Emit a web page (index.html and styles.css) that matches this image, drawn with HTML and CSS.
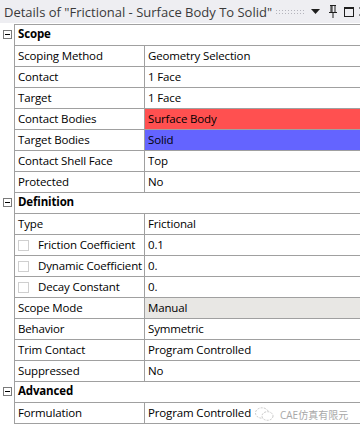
FILE: index.html
```html
<!DOCTYPE html>
<html lang="en">
<head>
  <meta charset="UTF-8">
  <meta name="viewport" content="width=device-width, initial-scale=1.0">
  <title>Details</title>
  <link rel="stylesheet" href="styles.css">
</head>
<body>
  <div class="panel">
    <div class="titlebar">
      <span class="title">Details of "Frictional - Surface Body To Solid"</span>
      <span class="grip"></span>
      <span class="tb-icon">
        <svg width="9" height="6" viewBox="0 0 9 6"><path d="M0 0H9L4.5 5Z" fill="#1e1e1e"/></svg>
      </span>
      <span class="tb-icon">
        <svg width="8" height="13" viewBox="0 0 8 13"><path d="M1 0.5H7M2 0.5V7M3 0.5V7M6 0.5V7M0 7.5H8M4 8V13" stroke="#1e1e1e" fill="none"/></svg>
      </span>
      <span class="tb-icon">
        <svg width="10" height="10" viewBox="0 0 10 10"><rect x="0.5" y="0.5" width="9" height="9" fill="none" stroke="#1e1e1e"/><path d="M0 1.5H10" stroke="#1e1e1e"/></svg>
      </span>
      <span class="tb-icon">
        <svg width="9" height="9" viewBox="0 0 9 9"><path d="M0.5 0.5L8.5 8.5M8.5 0.5L0.5 8.5" stroke="#1e1e1e" stroke-width="1.4"/></svg>
      </span>
    </div>

    <div class="grid">
      <div class="section"><span class="toggle"></span><span class="section-name">Scope</span></div>
      <div class="row"><span></span><div class="name">Scoping Method</div><div class="value">Geometry Selection</div></div>
      <div class="row"><span></span><div class="name">Contact</div><div class="value">1 Face</div></div>
      <div class="row"><span></span><div class="name">Target</div><div class="value">1 Face</div></div>
      <div class="row"><span></span><div class="name">Contact Bodies</div><div class="value red">Surface Body</div></div>
      <div class="row"><span></span><div class="name">Target Bodies</div><div class="value blue">Solid</div></div>
      <div class="row"><span></span><div class="name">Contact Shell Face</div><div class="value">Top</div></div>
      <div class="row"><span></span><div class="name">Protected</div><div class="value">No</div></div>

      <div class="section"><span class="toggle"></span><span class="section-name">Definition</span></div>
      <div class="row"><span></span><div class="name">Type</div><div class="value">Frictional</div></div>
      <div class="row"><span></span><div class="name"><span class="check"></span>Friction Coefficient</div><div class="value">0.1</div></div>
      <div class="row"><span></span><div class="name"><span class="check"></span>Dynamic Coefficient</div><div class="value">0.</div></div>
      <div class="row"><span></span><div class="name"><span class="check"></span>Decay Constant</div><div class="value">0.</div></div>
      <div class="row"><span></span><div class="name">Scope Mode</div><div class="value readonly">Manual</div></div>
      <div class="row"><span></span><div class="name">Behavior</div><div class="value">Symmetric</div></div>
      <div class="row"><span></span><div class="name">Trim Contact</div><div class="value">Program Controlled</div></div>
      <div class="row"><span></span><div class="name">Suppressed</div><div class="value">No</div></div>

      <div class="section"><span class="toggle"></span><span class="section-name">Advanced</span></div>
      <div class="row"><span></span><div class="name">Formulation</div><div class="value">Program Controlled</div></div>
    </div>

    <div class="watermark">
      <svg width="19" height="15" viewBox="0 0 19 15">
        <ellipse cx="7" cy="6" rx="6.5" ry="5.2" fill="none" stroke="#c8c8c8" stroke-dasharray="2 1.2"/>
        <ellipse cx="12.5" cy="9" rx="5.5" ry="4.3" fill="#fff" stroke="#c8c8c8" stroke-dasharray="2 1.2"/>
      </svg>
      <span>CAE仿真有限元</span>
    </div>
  </div>
</body>
</html>
```

FILE: styles.css
```css
body {
  margin: 0;
  background-color: #fff;
  font-family: "Segoe UI", "Open Sans", "Noto Sans CJK SC", sans-serif;
  font-size: 11.5px;
  letter-spacing: -0.15px;
  color: #000;
}

.panel {
  position: relative;
  width: 360px;
  height: 432px;
  overflow: hidden;
}

/* Title bar */
.titlebar {
  display: flex;
  align-items: center;
  height: 23px;
  padding-left: 4px;
  background-color: #eeeef2;
  white-space: nowrap;
}

.title {
  font-size: 13px;
  letter-spacing: 0;
  color: #3a3a3a;
  flex-shrink: 0;
}

.grip {
  width: 30px;
  height: 5px;
  margin-left: 3px;
  background-image: radial-gradient(circle, #b4b4bc 0.6px, transparent 0.8px);
  background-size: 3px 3px;
  flex-shrink: 0;
}

.tb-icon {
  display: flex;
  align-items: center;
  margin-left: 6px;
  flex-shrink: 0;
}

.tb-icon:nth-child(4) {
  margin-left: 9px;
}

.tb-icon:nth-child(5) {
  margin-left: 7px;
}

.tb-icon:nth-child(6) {
  margin-left: 5px;
}

/* Property grid */
.grid {
  margin-top: 1px;
}

.section,
.row {
  display: grid;
  grid-template-columns: 14px 130px 1fr;
  height: 21px;
}

.section {
  grid-template-columns: 14px 1fr;
}

.section-name {
  border-left: 1px solid #a0a0a0;
  border-bottom: 1px solid #a0a0a0;
  padding-left: 3px;
  font-weight: bold;
  line-height: 18px;
}

.grid > .section:first-child {
  height: 22px;
}

.grid > .section:first-child .section-name {
  border-top: 1px solid #a0a0a0;
}

.grid > .section:first-child .toggle {
  margin-top: 6px;
}

.toggle {
  position: relative;
  width: 9px;
  height: 9px;
  margin: 5px 0 0 3px;
  border: 1px solid #7a7a7a;
  box-sizing: border-box;
  background-color: #fff;
}

.toggle::after {
  content: "";
  position: absolute;
  left: 1px;
  top: 3px;
  width: 5px;
  height: 1px;
  background-color: #000;
}

.name,
.value {
  display: flex;
  align-items: center;
  border-left: 1px solid #a0a0a0;
  border-bottom: 1px solid #a0a0a0;
  padding: 0 0 2px 3px;
  white-space: nowrap;
  overflow: hidden;
}

.check {
  width: 11px;
  height: 11px;
  margin: 2px 9px 0 0;
  border: 1px solid #cfcfcf;
  box-sizing: border-box;
  flex-shrink: 0;
}

.value.red {
  background-color: #ff5050;
}

.value.blue {
  background-color: #6464ff;
}

.value.readonly {
  background-color: #e8e7e4;
}

/* Watermark */
.watermark {
  position: absolute;
  left: 255px;
  top: 407px;
  display: flex;
  align-items: center;
  gap: 6px;
  color: #a8a8a8;
  font-size: 10px;
  letter-spacing: 0;
  white-space: nowrap;
}
```
